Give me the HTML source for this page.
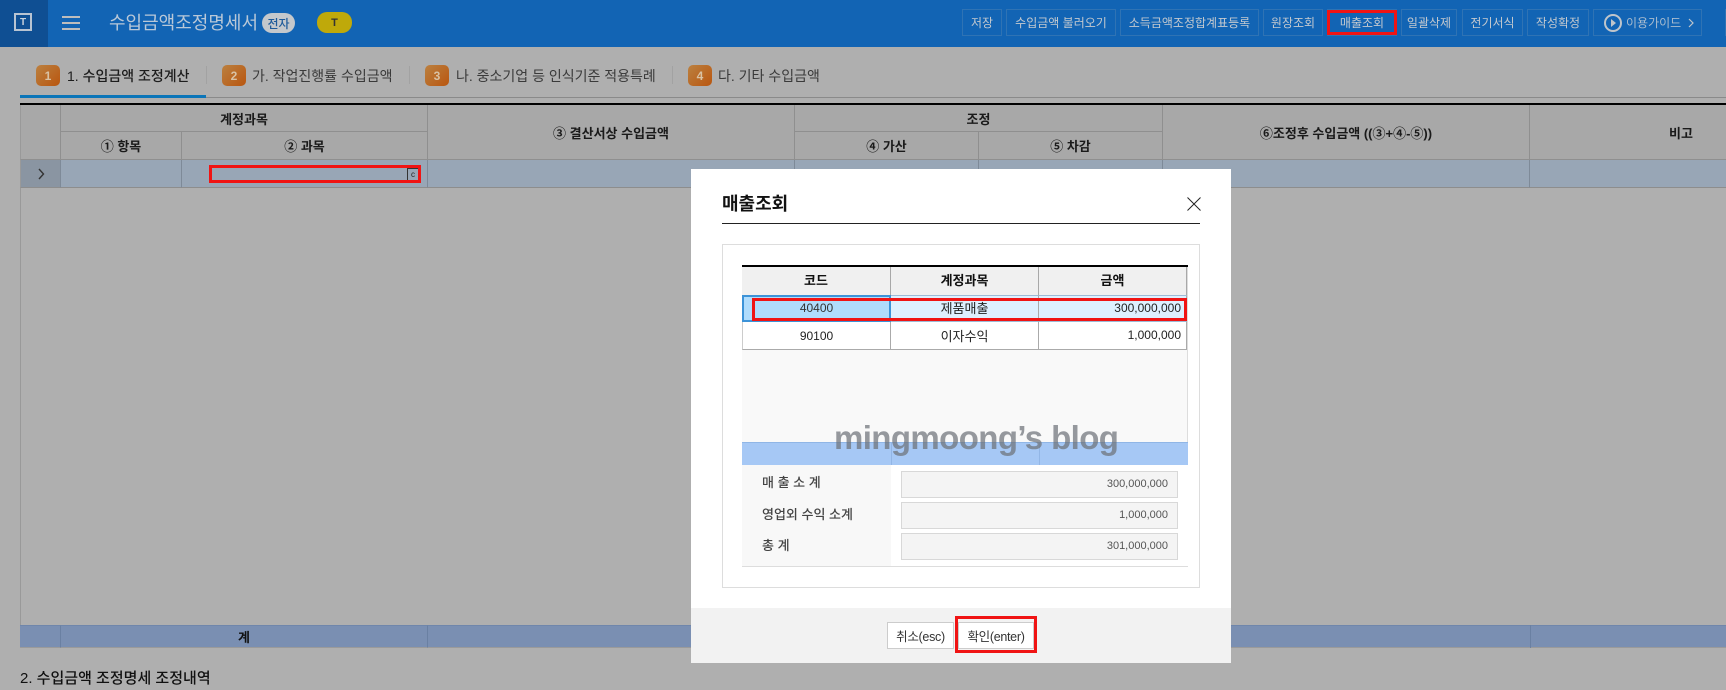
<!DOCTYPE html>
<html lang="ko"><head><meta charset="utf-8"><title>매출조회</title>
<style>
html,body{margin:0;padding:0;width:1726px;height:690px;overflow:hidden;background:#afafaf}
body{position:relative;font-family:"Liberation Sans","Noto Sans CJK KR",sans-serif;color:#111}
div,span{position:absolute;box-sizing:border-box;white-space:nowrap}
.c{display:flex;align-items:center;justify-content:center}
.btn{top:9px;height:27px;border:1px solid #2f73b4;color:#c4c9cf;font-size:12px}
.tb{top:65px;width:24px;height:21px;border-radius:5px;background:linear-gradient(135deg,#bb8040,#b9560f);color:#d9c2a4;font-size:12px;font-weight:700}
.tt{top:64px;height:24px;font-size:14px;line-height:24px;color:#2a2a2a}
.th{background:#a8a8a8;border-right:1px solid #8f8f8f;border-bottom:1px solid #8f8f8f;font-size:13px;font-weight:700;color:#1a1a1a}
.dr{top:160px;height:28px;background:#98a6b6;border-right:1px solid #7e8a98;border-bottom:1px solid #8d8d8d}
.tr{top:625px;height:23px;background:#7a8fb2;border-right:1px solid #6a80a2;border-top:1px solid #6f86ab;border-bottom:1px solid #9a9a9a}
.red{border:3px solid #f01414}
.mh{background:#f0f0f0;border-right:1px solid #a8a8a8;font-size:13px;font-weight:700;top:267px;height:28px;color:#111;padding-bottom:3px}
.md{font-size:13px;color:#222;border-right:1px solid #aaa;border-bottom:1px solid #aaa;height:28px}
.n{font-size:12px}
.lb{left:762px;font-size:13px;color:#444;font-weight:500;height:20px;line-height:20px}
.inp{left:901px;width:277px;height:27px;background:#f4f4f4;border:1px solid #d8d8d8;font-size:11px;color:#555;text-align:right;padding-right:9px;line-height:25px}
</style></head><body>

<div style="left:0;top:0;width:1726px;height:47px;background:#1264b4"></div>
<div style="left:0;top:0;width:48px;height:47px;background:#0f4f93"></div>
<div class="c" style="left:14px;top:13px;width:18px;height:18px;border:2px solid #b8c4d2;color:#c9d2dc;font-size:10px;font-weight:700">T</div>
<div style="left:62px;top:16px;width:18px;height:2px;background:#bdbdbd"></div>
<div style="left:62px;top:22px;width:18px;height:2px;background:#bdbdbd"></div>
<div style="left:62px;top:28px;width:18px;height:2px;background:#bdbdbd"></div>
<div style="left:109px;top:10px;height:26px;line-height:26px;font-size:18px;color:#b9c8d8">수입금액조정명세서</div>
<div class="c" style="left:262px;top:13px;width:33px;height:20px;border-radius:10px;background:#c4c8cc;color:#1d5a9a;font-size:12px;font-weight:500">전자</div>
<div class="c" style="left:317px;top:12px;width:35px;height:21px;border-radius:10px;background:#bfa90a;color:#333;font-size:11px;font-weight:700">T</div>

<div class="btn c" style="left:962px;width:40px">저장</div>
<div class="btn c" style="left:1006px;width:110px">수입금액 불러오기</div>
<div class="btn c" style="left:1120px;width:139px">소득금액조정합계표등록</div>
<div class="btn c" style="left:1263px;width:60px">원장조회</div>
<div class="btn c" style="left:1327px;width:70px">매출조회</div>
<div class="btn c" style="left:1401px;width:56px">일괄삭제</div>
<div class="btn c" style="left:1462px;width:61px">전기서식</div>
<div class="btn c" style="left:1527px;width:62px">작성확정</div>
<div class="btn" style="left:1593px;width:109px"></div>
<svg style="position:absolute;left:1603px;top:13px" width="20" height="20" viewBox="0 0 20 20"><circle cx="10" cy="10" r="8" fill="none" stroke="#bfc5cb" stroke-width="2"/><path d="M8 6l5 4-5 4z" fill="#bfc5cb"/></svg>
<div style="left:1626px;top:13px;height:20px;line-height:20px;font-size:12px;color:#a9bccf">이용가이드</div>
<svg style="position:absolute;left:1687px;top:18px" width="8" height="10" viewBox="0 0 8 10"><path d="M2 1l4 4-4 4" fill="none" stroke="#bfc5cb" stroke-width="1.2"/></svg>
<div class="btn red" style="left:1327px;top:10px;width:70px;height:25px;background:none"></div>
<div style="left:1725px;top:9px;width:1px;height:27px;background:#2f73b4"></div>

<div style="left:20px;top:97px;width:1706px;height:1px;background:#8a8a8a"></div>
<div style="left:20px;top:95px;width:186px;height:3px;background:#0b75b8"></div>
<div class="tb c" style="left:36px">1</div><div class="tt" style="left:67px;color:#1d1d1d;font-weight:500">1. 수입금액 조정계산</div>
<div style="left:206px;top:66px;width:1px;height:18px;background:#a2a2a2"></div>
<div class="tb c" style="left:222px">2</div><div class="tt" style="left:252px;color:#3a3a3a">가. 작업진행률 수입금액</div>
<div style="left:409px;top:66px;width:1px;height:18px;background:#a2a2a2"></div>
<div class="tb c" style="left:425px">3</div><div class="tt" style="left:456px;color:#3a3a3a">나. 중소기업 등 인식기준 적용특례</div>
<div style="left:672px;top:66px;width:1px;height:18px;background:#a2a2a2"></div>
<div class="tb c" style="left:688px">4</div><div class="tt" style="left:718px;color:#3a3a3a">다. 기타 수입금액</div>

<div style="left:20px;top:103px;width:1706px;height:2px;background:#000"></div>
<div class="th" style="left:20px;top:105px;width:41px;height:55px;border-left:1px solid #999"></div>
<div class="th c" style="left:61px;top:105px;width:367px;height:27px">계정과목</div>
<div class="th c" style="left:61px;top:132px;width:121px;height:28px">① 항목</div>
<div class="th c" style="left:182px;top:132px;width:246px;height:28px">② 과목</div>
<div class="th c" style="left:428px;top:105px;width:367px;height:55px">③ 결산서상 수입금액</div>
<div class="th c" style="left:795px;top:105px;width:368px;height:27px">조정</div>
<div class="th c" style="left:795px;top:132px;width:184px;height:28px">④ 가산</div>
<div class="th c" style="left:979px;top:132px;width:184px;height:28px">⑤ 차감</div>
<div class="th c" style="left:1163px;top:105px;width:367px;height:55px">⑥조정후 수입금액 ((③+④-⑤))</div>
<div class="th c" style="left:1530px;top:105px;width:196px;height:55px;border-right:0;justify-content:flex-start;padding-left:139px">비고</div>

<div class="dr" style="left:20px;width:41px;background:#8a95a2;border-left:1px solid #999"></div>
<svg style="position:absolute;left:37px;top:168px" width="8" height="12" viewBox="0 0 8 12"><path d="M2 1l4.500 5L2 11" fill="none" stroke="#333" stroke-width="1.4"/></svg>
<div class="dr" style="left:61px;width:121px"></div>
<div class="dr" style="left:182px;width:246px"></div>
<div class="dr" style="left:428px;width:367px"></div>
<div class="dr" style="left:795px;width:184px"></div>
<div class="dr" style="left:979px;width:184px"></div>
<div class="dr" style="left:1163px;width:367px"></div>
<div class="dr" style="left:1530px;width:196px;border-right:0"></div>
<div class="red" style="left:209px;top:165px;width:212px;height:18px"></div>
<div class="c" style="left:407px;top:168px;width:11px;height:12px;border-left:1px solid #333;border-top:1px solid #333;font-size:8px;color:#222">c</div>

<div style="left:20px;top:188px;width:1px;height:437px;background:#999"></div>

<div class="tr" style="left:20px;width:41px"></div>
<div class="tr c" style="left:61px;width:367px;font-size:13px;font-weight:700;color:#111">계</div>
<div class="tr" style="left:428px;width:1298px;border-right:0"></div>
<div style="left:1530px;top:625px;width:1px;height:23px;background:#6a80a2"></div>
<div style="left:20px;top:669px;height:20px;line-height:20px;font-size:15px;font-weight:500;color:#111">2. 수입금액 조정명세 조정내역</div>

<!-- modal -->
<div style="left:691px;top:169px;width:540px;height:494px;background:#fff"></div>
<div style="left:722px;top:191px;height:26px;line-height:26px;font-size:18px;font-weight:700;color:#111">매출조회</div>
<svg style="position:absolute;left:1187px;top:197px" width="14" height="14" viewBox="0 0 14 14"><path d="M.5.5l13 13M13.500.5l-13 13" fill="none" stroke="#222" stroke-width="1"/></svg>
<div style="left:722px;top:223px;width:478px;height:1px;background:#222"></div>
<div style="left:722px;top:244px;width:478px;height:344px;border:1px solid #ddd"></div>

<div style="left:742px;top:265px;width:446px;height:2px;background:#000"></div>
<div class="mh c" style="left:742px;width:149px">코드</div>
<div class="mh c" style="left:891px;width:148px">계정과목</div>
<div class="mh c" style="left:1039px;width:148px">금액</div>

<div class="md c n" style="left:742px;top:295px;width:149px;height:27px;background:#b0dcfc;border:2px solid #3d93d8;color:#333;padding-bottom:1px">40400</div>
<div class="md c" style="left:891px;top:295px;width:148px;height:27px;background:#def0ff;border-top:1px solid #9dbbd6;border-bottom:1px solid #9dbbd6;padding-bottom:2px">제품매출</div>
<div class="md n" style="left:1039px;top:295px;width:148px;height:27px;background:#def0ff;text-align:right;padding-right:5px;line-height:24px;border-top:1px solid #9dbbd6;border-bottom:1px solid #9dbbd6">300,000,000</div>
<div class="md c n" style="left:742px;top:322px;width:149px;border-left:1px solid #ccc;">90100</div>
<div class="md c" style="left:891px;top:322px;width:148px">이자수익</div>
<div class="md n" style="left:1039px;top:322px;width:148px;text-align:right;padding-right:5px;line-height:27px">1,000,000</div>

<div style="left:742px;top:350px;width:446px;height:92px;background:#f9f9f9"></div>
<div style="left:1187px;top:267px;width:1px;height:175px;background:#ddd"></div>
<div style="left:742px;top:442px;width:446px;height:23px;background:#a6c8f5;border-top:1px solid #90b6e6"></div>
<div style="left:891px;top:442px;width:1px;height:23px;background:#92b6e6"></div>
<div style="left:1039px;top:442px;width:1px;height:23px;background:#92b6e6"></div>

<div style="left:742px;top:465px;width:149px;height:101px;background:#f8f8f8"></div>
<div style="left:742px;top:566px;width:446px;height:1px;background:#ddd"></div>
<div class="lb" style="top:473px">매 출 소 계</div>
<div class="lb" style="top:505px">영업외 수익 소계</div>
<div class="lb" style="top:536px">총 계</div>
<div class="inp" style="top:471px">300,000,000</div>
<div class="inp" style="top:502px">1,000,000</div>
<div class="inp" style="top:533px">301,000,000</div>

<div class="red" style="left:752px;top:298px;width:435px;height:23px"></div>

<div style="left:834px;top:417px;height:42px;line-height:42px;font-size:33px;font-weight:700;color:rgba(110,113,121,.72);letter-spacing:-.6px">mingmoong’s blog</div>

<div style="left:691px;top:608px;width:540px;height:55px;background:#f2f2f2"></div>
<div class="c" style="left:887px;top:622px;width:67px;height:27px;background:#fff;border:1px solid #ccc;font-size:12.500px;color:#333;letter-spacing:-.3px">취소(esc)</div>
<div class="c" style="left:958px;top:622px;width:76px;height:27px;background:#fff;border:1px solid #ccc;font-size:12.500px;color:#333;letter-spacing:-.3px">확인(enter)</div>
<div class="red" style="left:955px;top:616px;width:82px;height:37px"></div>
</body></html>
